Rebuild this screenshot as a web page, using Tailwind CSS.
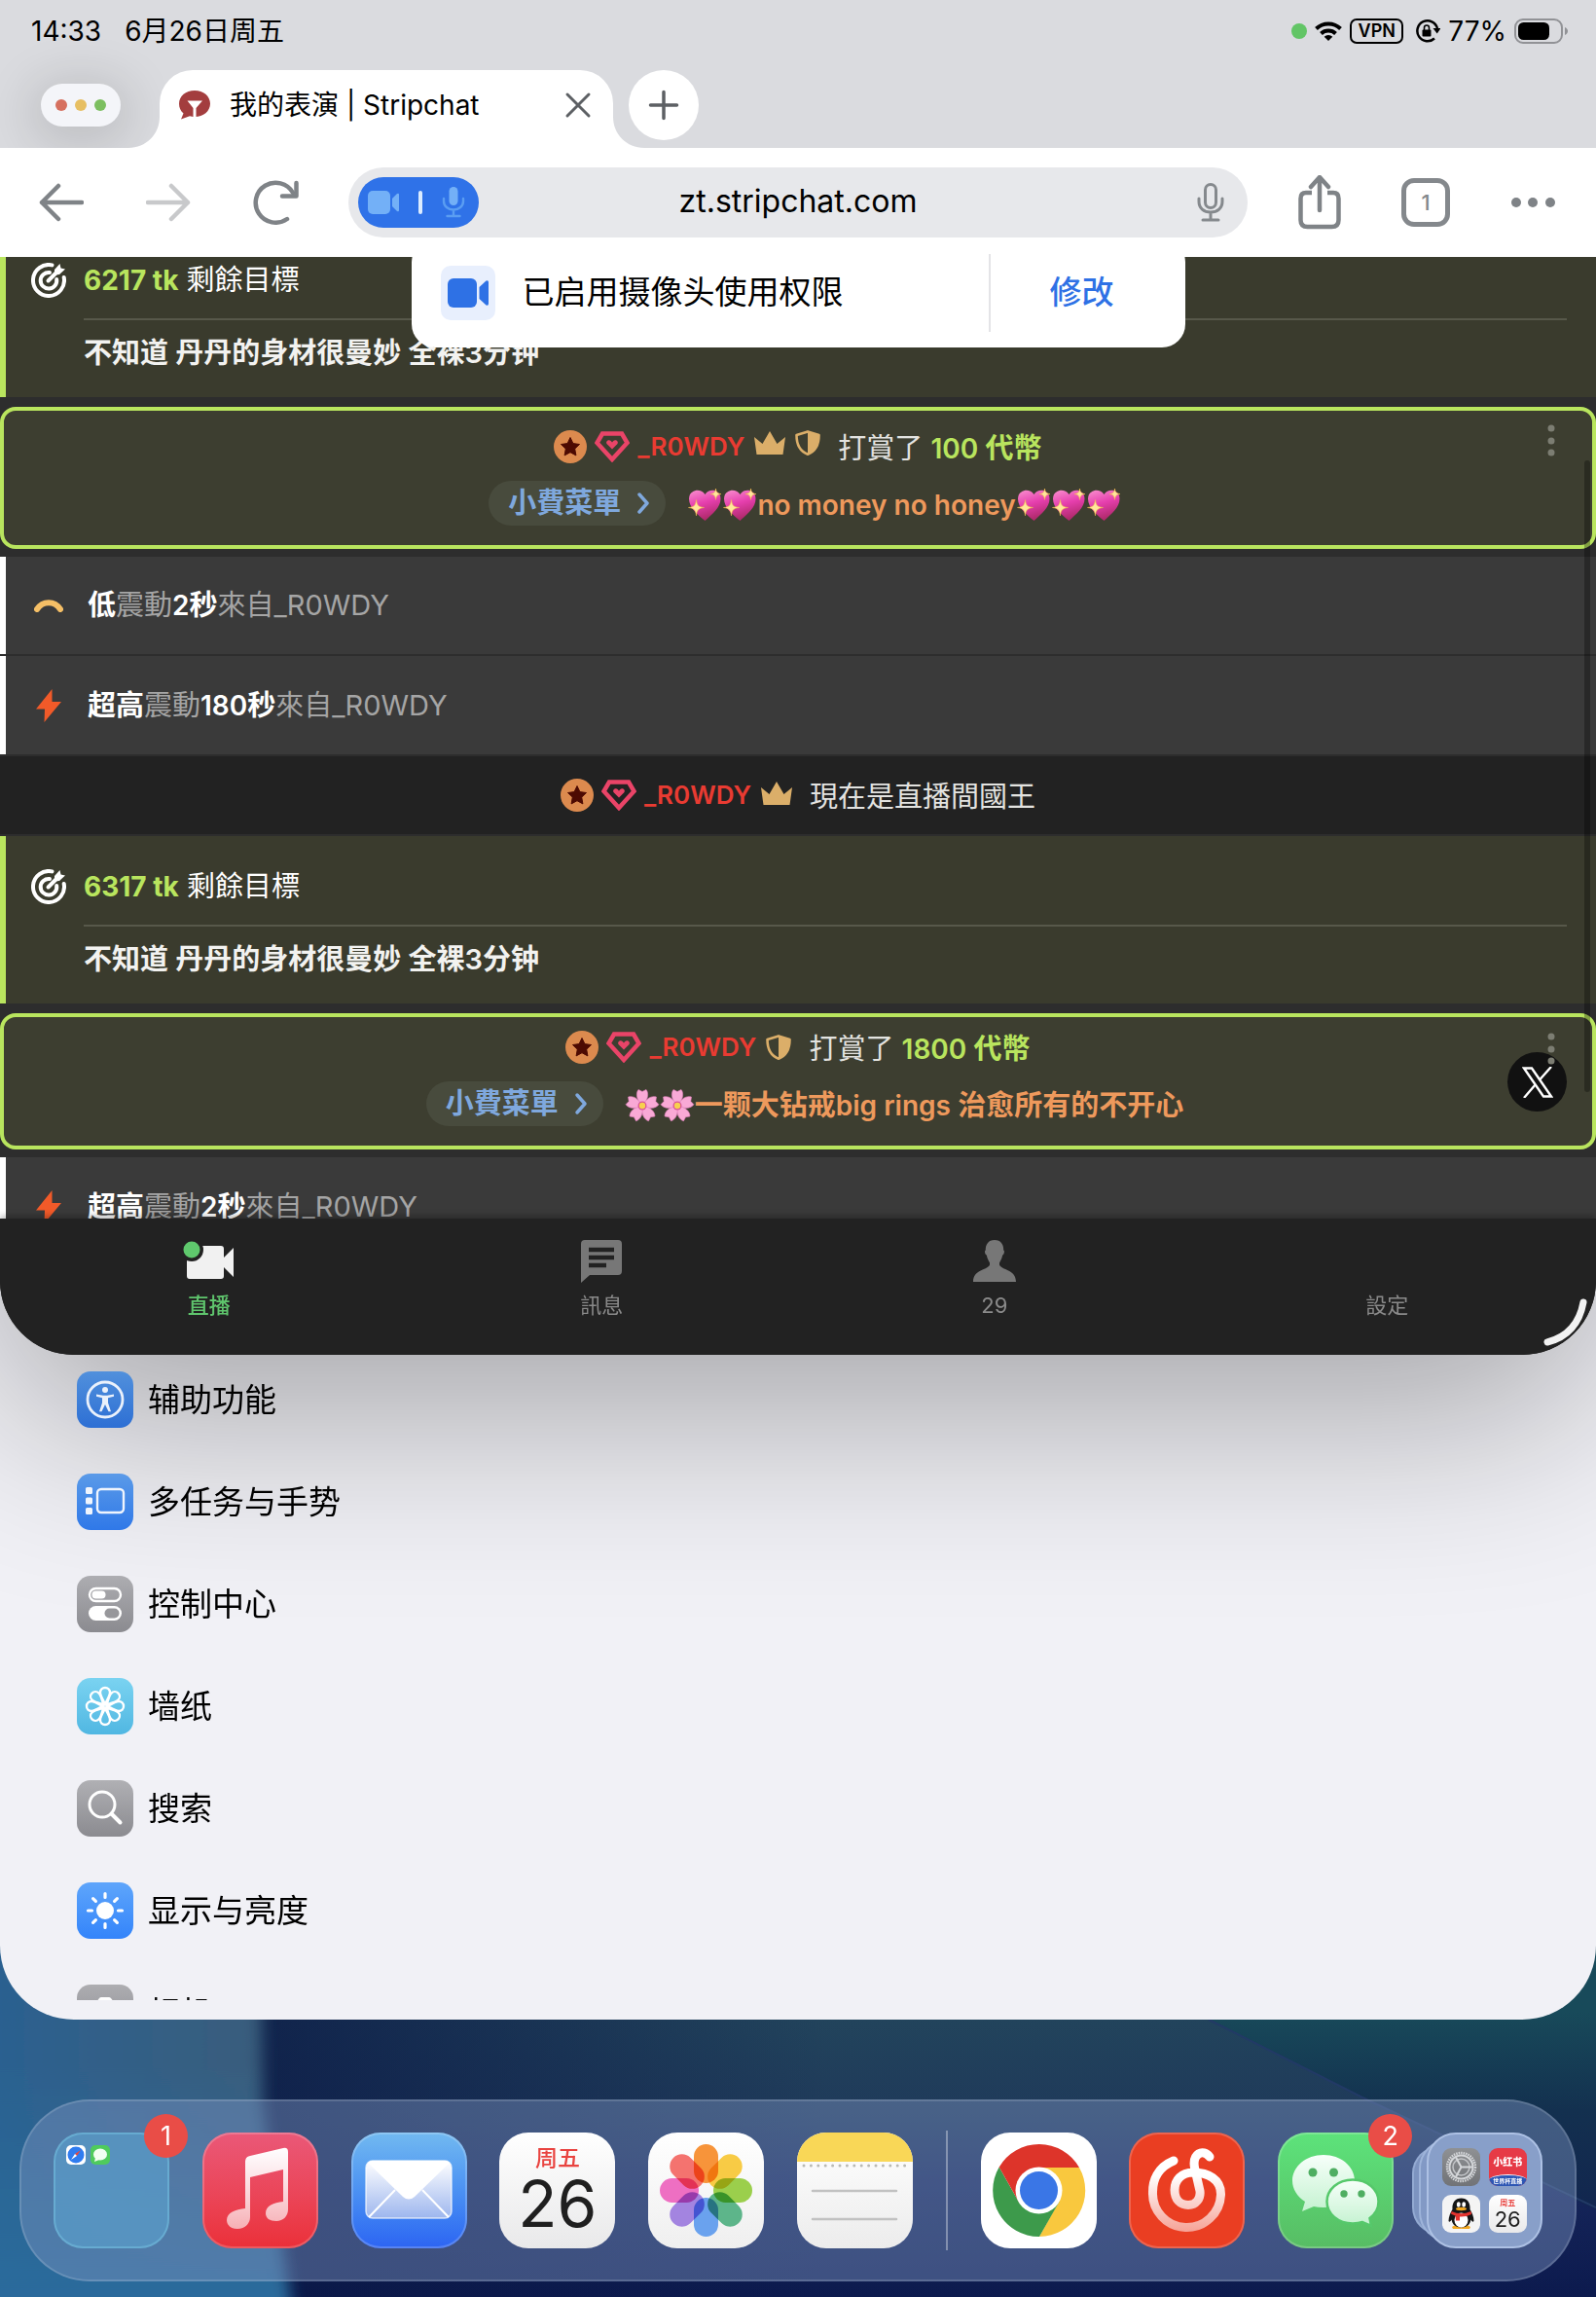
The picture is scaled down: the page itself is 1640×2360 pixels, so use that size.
<!DOCTYPE html>
<html lang="zh-CN">
<head>
    <meta charset="UTF-8">
    <meta name="viewport" content="width=device-width, initial-scale=1.0">
    <title>我的表演 | Stripchat</title>
    <script src="https://cdn.jsdelivr.net/npm/@tailwindcss/browser@4"></script>
</head>
<body class="bg-[#0c1c4c] font-['Inter','Noto_Sans_CJK_SC',sans-serif] text-black">

    <!-- 共用图标 -->
    <svg width="0" height="0" class="absolute" aria-hidden="true">
        <defs>
            <linearGradient id="heart-fill" x1="0" y1="0" x2="0.3" y2="1">
                <stop offset="0" stop-color="#f98fce"/><stop offset="0.5" stop-color="#e63fae"/><stop offset="1" stop-color="#b02a6c"/>
            </linearGradient>
            <linearGradient id="white-fade" x1="0" y1="0" x2="0" y2="1">
                <stop offset="0" stop-color="#fff"/><stop offset="1" stop-color="#fff" stop-opacity="0.6"/>
            </linearGradient>
            <symbol id="i-league" viewBox="0 0 34 34">
                <circle cx="17" cy="17" r="17" fill="#dc8a4e"/>
                <path d="M17 7.500l2.900 6.100 6.600.9-4.800 4.600 1.200 6.800-5.900-3.200-5.900 3.200 1.200-6.800-4.800-4.600 6.600-.9z" fill="#4d0a02" stroke="#4d0a02" stroke-linejoin="round"/>
            </symbol>
            <symbol id="i-gem" viewBox="0 0 36 32">
                <path d="M8 2.500h20l5.500 9.500L18 29 2.500 12z" fill="none" stroke="#ea4468" stroke-width="4.500"/>
                <path d="M18 18.500l-5.300-5.200c-2-2.500 1.800-5.300 4-3.200l1.300 1.300 1.300-1.300c2.200-2.100 6 .7 4 3.200z" fill="#ea4468"/>
            </symbol>
            <symbol id="i-crown" viewBox="0 0 32 24">
                <path d="M2.500 24L0 6l8.500 7L16 0l7.500 13L32 6l-2.500 18z" fill="#dbae69"/>
            </symbol>
            <symbol id="i-shield" viewBox="0 0 26 26">
                <path d="M13 1.400L24.500 5C24.500 15 21.500 21.500 13 24.700 4.500 21.500 1.500 15 1.500 5z" fill="none" stroke="#dbae69" stroke-width="2.600" stroke-linejoin="round"/>
                <path d="M13 1.400L24.500 5C24.500 15 21.500 21.500 13 24.700z" fill="#dbae69"/>
            </symbol>
            <symbol id="i-heart" viewBox="0 0 36 36">
                <path d="M18.500 34C11 28 2 20.500 2 11.500 2 2.500 13.500-.5 18.500 7 23.500-.5 34.500 2.500 34.500 11.500 34.500 20.500 26 27 18.500 34z" fill="url(#heart-fill)"/>
                <path d="M9.500 12.500c.8 5.800 2.300 7.300 8 8-5.700.8-7.200 2.300-8 8.300-.8-6-2.300-7.500-8-8.300 5.700-.7 7.200-2.200 8-8zM29.500 1c.6 4 1.700 5 5.500 5.600-3.800.6-4.900 1.700-5.500 5.800-.6-4.100-1.700-5.200-5.500-5.800C27.800 6 28.900 5 29.500 1z" fill="#ffe79a" stroke="#f3b74f" stroke-width=".6"/>
            </symbol>
            <symbol id="i-blossom" viewBox="0 0 36 36">
                <g fill="#f9a9d6" stroke="#e382bd" stroke-width=".6">
                    <path id="petal" d="M18 17C12 13 11 5 14 1.500l4 2 4-2C25 5 24 13 18 17z"/>
                    <use href="#petal" transform="rotate(72 18 18)"/>
                    <use href="#petal" transform="rotate(144 18 18)"/>
                    <use href="#petal" transform="rotate(216 18 18)"/>
                    <use href="#petal" transform="rotate(288 18 18)"/>
                </g>
                <circle cx="18" cy="18" r="4.500" fill="#d9529a"/><circle cx="18" cy="18" r="3.200" fill="#f7d04e"/>
            </symbol>
            <symbol id="i-goal" viewBox="0 0 36 36">
                <g fill="none" stroke="#fff" stroke-width="4" stroke-linecap="round">
                    <path d="M21.500 2.400A16 16 0 1 0 33.700 15"/>
                    <path d="M19 10A8.300 8.300 0 1 0 26.200 17"/>
                    <path d="M17.500 18.500L26 10"/>
                </g>
                <path d="M24 7l5.500-6 1 4.500 4.500 1-6 5.500-5 .500z" fill="#fff"/>
            </symbol>
            <symbol id="i-bolt" viewBox="0 0 26 34">
                <path d="M16.500 0L0 20.500h9L8.500 34 26 13h-9.500z" fill="#f15a29"/>
            </symbol>
            <symbol id="i-kebab" viewBox="0 0 8 34">
                <g fill="#7c7d72"><circle cx="4" cy="4" r="3.500"/><circle cx="4" cy="17" r="3.500"/><circle cx="4" cy="29" r="3.500"/></g>
            </symbol>
            <symbol id="i-chevron" viewBox="0 0 14 24">
                <path d="M3 3l8 9-8 9" fill="none" stroke="#7fa8dd" stroke-width="3.500" stroke-linecap="round" stroke-linejoin="round"/>
            </symbol>
        </defs>
    </svg>

    <main class="relative isolate flex min-h-screen flex-col">

        <!-- 壁纸 -->
        <svg class="absolute inset-x-0 bottom-0 -z-10 h-[480px] w-full" viewBox="0 0 1640 480" preserveAspectRatio="none" aria-hidden="true">
            <defs>
                <linearGradient id="wp-main" x1="0" y1="0" x2="0" y2="1">
                    <stop offset="0.4" stop-color="#22445c"/><stop offset="0.6" stop-color="#1f3a5a"/><stop offset="0.75" stop-color="#16265a"/><stop offset="1" stop-color="#0c1a4e"/>
                </linearGradient>
                <linearGradient id="wp-dark" x1="0" y1="0" x2="1" y2="0">
                    <stop offset="0" stop-color="#0a1846" stop-opacity="0.75"/><stop offset="1" stop-color="#0a1846" stop-opacity="0"/>
                </linearGradient>
                <linearGradient id="wp-left" x1="0" y1="0" x2="1" y2="0">
                    <stop offset="0" stop-color="#286294"/><stop offset="1" stop-color="#3b5c7a"/>
                </linearGradient>
                <linearGradient id="wp-left-low" x1="0" y1="0" x2="0" y2="1">
                    <stop offset="0.5" stop-color="#2b6b9c" stop-opacity="0"/><stop offset="1" stop-color="#2b6b9c"/>
                </linearGradient>
                <linearGradient id="wp-right" x1="0" y1="0" x2="0" y2="1">
                    <stop offset="0.3" stop-color="#184a5a"/><stop offset="0.65" stop-color="#13304f"/><stop offset="1" stop-color="#12264f"/>
                </linearGradient>
                <filter id="wp-blur"><feGaussianBlur stdDeviation="8 0"/></filter>
            </defs>
            <rect width="1640" height="480" fill="url(#wp-main)"/>
            <rect x="250" width="600" height="480" fill="url(#wp-dark)"/>
            <path d="M1100 100L1242 195 1400 275 1640 390V100z" fill="url(#wp-right)"/>
            <path d="M1242 195L1400 275 1640 388" fill="none" stroke="#223a66" stroke-width="2"/>
            <g filter="url(#wp-blur)">
                <path d="M-60 0H266L270 280 298 480H-60z" fill="url(#wp-left)"/>
                <path d="M-60 0H266L270 280 298 480H-60z" fill="url(#wp-left-low)"/>
            </g>
        </svg>

        <!-- 设置窗口 -->
        <div class="overflow-hidden rounded-b-[76px] bg-[#f1f1f6] pb-5">

            <!-- 浏览器窗口 -->
            <section class="relative overflow-clip rounded-b-[76px] bg-[#222] shadow-[0_60px_200px_0_rgba(0,0,0,0.32)]">

                <header class="bg-[#dadbdf]">
                    <div class="flex h-16 items-center justify-between pr-7 pl-8 text-[28px] leading-none">
                        <div class="flex gap-6">
                            <time>14:33</time>
                            <span>6月26日周五</span>
                        </div>
                        <div class="flex items-center gap-2">
                            <span class="size-4 rounded-full bg-[#62c566]"></span>
                            <svg class="h-5 w-7" viewBox="0 0 28 20" aria-label="Wi-Fi">
                                <g fill="none" stroke="#000" stroke-width="4"><path d="M1.500 7.500a18 18 0 0 1 25 0"/><path d="M6.500 12.500a11 11 0 0 1 15 0"/></g>
                                <path d="M14 20l-4.300-4.300a6 6 0 0 1 8.600 0z"/>
                            </svg>
                            <span class="flex h-[26px] w-[55px] items-center justify-center rounded-[7px] border-2 border-black text-lg leading-none font-semibold">VPN</span>
                            <svg class="ml-1 size-[26px]" viewBox="0 0 26 26" aria-label="旋转锁定">
                                <path d="M20 20.500A10.500 10.500 0 1 1 23 10" fill="none" stroke="#000" stroke-width="2.500"/>
                                <path d="M18.500 10h8L22.700 15.500z"/>
                                <rect x="7.500" y="11.500" width="9" height="7" rx="1"/><path d="M9.500 12V9.500a2.500 2.500 0 0 1 5 0V12" fill="none" stroke="#000" stroke-width="1.600"/>
                            </svg>
                            <span>77%</span>
                            <svg class="h-[26px] w-14" viewBox="0 0 56 26" aria-label="电池">
                                <rect x="1" y="1" width="48" height="24" rx="8" fill="none" stroke="#919296" stroke-width="2"/>
                                <rect x="4" y="4" width="32" height="18" rx="5.500"/><path d="M52 9c4 1.500 4 6.500 0 8z" fill="#919296"/>
                            </svg>
                        </div>
                    </div>

                    <!-- 标签栏 -->
                    <div class="flex h-22 items-end">
                        <div class="flex h-22 w-[164px] items-center pl-[42px]">
                            <button class="flex h-11 w-[82px] items-center justify-center gap-2 rounded-full bg-[#f4f5f9] shadow-[0_8px_50px_12px_rgba(0,0,0,0.13)]" aria-label="窗口控制">
                                <span class="size-3 rounded-full bg-[#d6705f]"></span>
                                <span class="size-3 rounded-full bg-[#e7bf62]"></span>
                                <span class="size-3 rounded-full bg-[#7cbf60]"></span>
                            </button>
                        </div>
                        <div class="relative flex h-20 w-[466px] items-center rounded-t-[34px] bg-white pr-5 pb-2 pl-5">
                            <svg class="absolute bottom-0 -left-8 size-8" viewBox="0 0 32 32" aria-hidden="true"><path d="M32 0v32H0C18 32 32 18 32 0z" fill="#fff"/></svg>
                            <svg class="absolute -right-8 bottom-0 size-8" viewBox="0 0 32 32" aria-hidden="true"><path d="M0 0v32h32C14 32 0 18 0 0z" fill="#fff"/></svg>
                            <svg class="h-[30px] w-8 shrink-0" viewBox="0 0 32 30" aria-hidden="true">
                                <path d="M16 0c9 0 16 5.800 16 13.500S25 27 16 27c-2 0-3.500-.2-5-.7L2 29.500l2.500-6C1.500 21 0 17.500 0 13.500 0 5.800 7 0 16 0z" fill="#a33d3e"/>
                                <path d="M8.500 10.500h15.500L17.500 18v9h-3v-9z" fill="#fff"/>
                            </svg>
                            <h1 class="ml-5 text-[28px] whitespace-nowrap">我的表演 | Stripchat</h1>
                            <button class="ml-auto" aria-label="关闭标签页">
                                <svg class="size-8" viewBox="0 0 32 32"><path d="M5 5l22 22M27 5L5 27" stroke="#5d6064" stroke-width="3" stroke-linecap="round"/></svg>
                            </button>
                        </div>
                        <button class="mb-2 ml-4 flex size-[72px] items-center justify-center rounded-full bg-white" aria-label="新建标签页">
                            <svg class="size-8" viewBox="0 0 32 32"><path d="M16 2.500v27M2.500 16h27" stroke="#5d6064" stroke-width="3.500" stroke-linecap="round"/></svg>
                        </button>
                    </div>
                </header>

                <!-- 地址栏 -->
                <div class="relative flex h-28 items-center bg-white pr-10 pl-10">
                    <button aria-label="返回">
                        <svg class="h-10 w-[46px]" viewBox="0 0 46 40"><path d="M44 20H3M20 3L3 20l17 17" fill="none" stroke="#7f8387" stroke-width="4.500" stroke-linecap="round" stroke-linejoin="round"/></svg>
                    </button>
                    <button class="ml-16" aria-label="前进">
                        <svg class="h-10 w-[46px]" viewBox="0 0 46 40"><path d="M2 20h41M26 3l17 17-17 17" fill="none" stroke="#c8c9cb" stroke-width="4.500" stroke-linecap="round" stroke-linejoin="round"/></svg>
                    </button>
                    <button class="ml-16" aria-label="重新加载">
                        <svg class="h-[46px] w-12" viewBox="0 0 48 46"><g fill="none" stroke="#7f8387" stroke-width="4.500" stroke-linecap="round" stroke-linejoin="round"><path d="M35 40A20.500 20.500 0 1 1 41 13"/><path d="M44.500 3v13.500H30"/></g></svg>
                    </button>
                    <div class="relative ml-[50px] flex h-18 flex-1 items-center rounded-full bg-[#e7e8eb]">
                        <button class="absolute left-[10px] flex h-[52px] w-[124px] items-center justify-between rounded-full bg-[#2f72e8] px-[10px]" aria-label="摄像头和麦克风权限">
                            <svg class="h-6 w-8" viewBox="0 0 32 24"><rect width="23" height="24" rx="5" fill="#73b0f7"/><path d="M25 8l5-5q2-1 2 1v16q0 2-2 1l-5-5z" fill="#73b0f7"/></svg>
                            <span class="h-6 w-1 rounded bg-[#dcecff]"></span>
                            <svg class="mr-1 h-8 w-6" viewBox="0 0 24 32"><rect x="7.500" y="0" width="9" height="19" rx="4.500" fill="#73b0f7"/><path d="M2 12v3a10 8.500 0 0 0 20 0v-3M12 24v6M5.500 30h13" fill="none" stroke="#5a9df2" stroke-width="2.400" stroke-linecap="round"/></svg>
                        </button>
                        <input type="text" aria-label="网址" value="zt.stripchat.com" class="h-full w-full bg-transparent px-40 pb-1 text-center text-[32px] outline-none">
                        <button class="absolute right-6" aria-label="语音搜索">
                            <svg class="h-10 w-7" viewBox="0 0 28 40"><g fill="none" stroke="#85898d" stroke-width="3" stroke-linecap="round"><rect x="8.500" y="1.500" width="11" height="24" rx="5.500"/><path d="M2 16v3c0 7 5 11 12 11s12-4 12-11v-3M14 31v7M6 38h16"/></g></svg>
                        </button>
                    </div>
                    <button class="ml-[52px]" aria-label="分享">
                        <svg class="h-14 w-11" viewBox="0 0 44 56"><g fill="none" stroke="#7f8387" stroke-width="4.500" stroke-linecap="round" stroke-linejoin="round"><path d="M22 36V3M13 12l9-10 9 10"/><path d="M14 18H8q-5.500 0-5.500 6v22q0 7 7 7h25q7 0 7-7V24q0-6-5.500-6H30" stroke-linecap="butt"/></g></svg>
                    </button>
                    <button class="ml-[62px] flex size-[50px] items-center justify-center rounded-[13px] border-[5px] border-[#84888c] text-[22px] font-medium text-[#84888c]" aria-label="标签页数量">1</button>
                    <button class="ml-[62px]" aria-label="更多">
                        <svg class="h-10 w-12" viewBox="0 0 48 40"><g fill="#7f8387"><circle cx="6" cy="20" r="5"/><circle cx="23" cy="20" r="5"/><circle cx="41" cy="20" r="5"/></g></svg>
                    </button>
                </div>

                <!-- 权限提示 -->
                <div class="absolute inset-x-0 top-[245px] z-10 flex justify-center">
                    <div role="status" class="flex h-28 w-[795px] rounded-[24px] bg-white text-[33px]">
                        <div class="flex flex-1 items-center gap-7 pl-[30px]">
                            <span class="flex size-14 items-center justify-center rounded-[10px] bg-[#e8effd]">
                                <svg class="h-[30px] w-[42px]" viewBox="0 0 42 30" aria-hidden="true"><rect width="30" height="30" rx="6" fill="#2e71e5"/><path d="M32.500 9l7-6.500q2.500-1 2.500 1.500v22q0 2.500-2.500 1.500l-7-6.500z" fill="#2e71e5"/></svg>
                            </span>
                            <p>已启用摄像头使用权限</p>
                        </div>
                        <div class="my-4 w-[2px] bg-[#e4e4e7]"></div>
                        <button class="w-[200px] pr-3 font-medium text-[#2e71e5]">修改</button>
                    </div>
                </div>

                <!-- 聊天记录 -->
                <div class="relative h-[988px] overflow-hidden bg-[#2d2d2d] font-['Inter','Noto_Sans_CJK_TC',sans-serif] text-[29px] leading-9 text-[#e3e3e0]">
                    <ul class="-mt-7">
                        <li class="flex h-[172px] gap-[18px] border-l-[6px] border-[#b9e55e] bg-[#3a3b2d] pt-[34px] pr-[30px] pl-[26px]">
                            <svg class="size-9 shrink-0"><use href="#i-goal"/></svg>
                            <div class="flex-1">
                                <p class="border-b-2 border-[#57584a] pb-[21px] text-white"><strong class="text-[28px] font-bold text-[#b9e55e]">6217 tk</strong> 剩餘目標</p>
                                <p class="pt-4 font-semibold text-[#f2f2f0]">不知道 丹丹的身材很曼妙 全裸3分钟</p>
                            </div>
                        </li>
                        <li class="relative mt-[10px] h-[146px] rounded-2xl border-4 border-[#b9e55e] bg-[#3d3e30] pt-[13px]">
                            <div class="flex h-12 items-center justify-center">
                                <svg class="size-[34px]"><use href="#i-league"/></svg>
                                <svg class="ml-2 h-8 w-9"><use href="#i-gem"/></svg>
                                <a href="#" class="ml-2 text-[26px] font-semibold text-[#e93b32]">_R0WDY</a>
                                <svg class="mb-2 ml-[10px] h-6 w-8"><use href="#i-crown"/></svg>
                                <svg class="mb-2 ml-[10px] size-[26px]"><use href="#i-shield"/></svg>
                                <p class="mt-1 ml-[18px]">打賞了 <strong class="font-semibold text-[#b9e55e]"><span class="text-[28px]">100</span> 代幣</strong></p>
                            </div>
                            <div class="mt-[11px] flex h-[46px] items-center justify-center pl-[14px]">
                                <button class="flex h-full items-center gap-4 rounded-full bg-[#484b3d] pr-4 pl-5 font-semibold text-[#7fa8dd]">小費菜單<svg class="h-6 w-[14px]"><use href="#i-chevron"/></svg></button>
                                <p class="mt-1 ml-[22px] flex items-center text-[28px] font-semibold text-[#ee995c]">
                                    <svg class="size-9" role="img" aria-label="💖"><use href="#i-heart"/></svg><svg class="size-9" role="img" aria-label="💖"><use href="#i-heart"/></svg>no money no honey<svg class="size-9" role="img" aria-label="💖"><use href="#i-heart"/></svg><svg class="size-9" role="img" aria-label="💖"><use href="#i-heart"/></svg><svg class="size-9" role="img" aria-label="💖"><use href="#i-heart"/></svg>
                                </p>
                            </div>
                            <button class="absolute top-[14px] right-[38px]" aria-label="更多"><svg class="h-[34px] w-2"><use href="#i-kebab"/></svg></button>
                        </li>
                        <li class="mt-2 flex h-25 items-center border-l-[6px] border-white bg-[#3a3a3a] pl-[29px] text-[#a5a5a5]">
                            <svg class="h-[14px] w-[30px]" viewBox="0 0 30 14" aria-hidden="true"><path d="M3 11C9 2 21 2 27 11" fill="none" stroke="#f5bf66" stroke-width="6" stroke-linecap="round"/></svg>
                            <p class="ml-[25px]"><b class="font-semibold text-white">低</b>震動<b class="font-semibold text-white"><span class="text-[28px]">2</span>秒</b>來自_R0WDY</p>
                        </li>
                        <li class="mt-[2px] flex h-[101px] items-center border-l-[6px] border-white bg-[#3a3a3a] pl-[31px] text-[#a5a5a5]">
                            <svg class="h-[34px] w-[26px]"><use href="#i-bolt"/></svg>
                            <p class="ml-[27px]"><b class="font-semibold text-white">超高</b>震動<b class="font-semibold text-white"><span class="text-[28px]">180</span>秒</b>來自_R0WDY</p>
                        </li>
                        <li class="mt-[2px] flex h-20 items-center justify-center bg-[#222]">
                            <svg class="size-[34px]"><use href="#i-league"/></svg>
                            <svg class="ml-2 h-8 w-9"><use href="#i-gem"/></svg>
                            <a href="#" class="ml-2 text-[26px] font-semibold text-[#e93b32]">_R0WDY</a>
                            <svg class="mb-1 ml-[10px] h-6 w-8"><use href="#i-crown"/></svg>
                            <p class="mt-1 ml-[18px]">現在是直播間國王</p>
                        </li>
                        <li class="mt-[2px] flex h-[172px] gap-[18px] border-l-[6px] border-[#b9e55e] bg-[#3a3b2d] pt-[34px] pr-[30px] pl-[26px]">
                            <svg class="size-9 shrink-0"><use href="#i-goal"/></svg>
                            <div class="flex-1">
                                <p class="border-b-2 border-[#57584a] pb-[21px] text-white"><strong class="text-[28px] font-bold text-[#b9e55e]">6317 tk</strong> 剩餘目標</p>
                                <p class="pt-4 font-semibold text-[#f2f2f0]">不知道 丹丹的身材很曼妙 全裸3分钟</p>
                            </div>
                        </li>
                        <li class="relative mt-[10px] h-[140px] rounded-2xl border-4 border-[#b9e55e] bg-[#3d3e30] pt-[7px]">
                            <div class="flex h-12 items-center justify-center">
                                <svg class="size-[34px]"><use href="#i-league"/></svg>
                                <svg class="ml-2 h-8 w-9"><use href="#i-gem"/></svg>
                                <a href="#" class="ml-2 text-[26px] font-semibold text-[#e93b32]">_R0WDY</a>
                                <svg class="ml-[10px] size-[26px]"><use href="#i-shield"/></svg>
                                <p class="mt-1 ml-[18px]">打賞了 <strong class="font-semibold text-[#b9e55e]"><span class="text-[28px]">1800</span> 代幣</strong></p>
                            </div>
                            <div class="mt-[11px] flex h-[46px] items-center justify-center pl-[14px]">
                                <button class="flex h-full items-center gap-4 rounded-full bg-[#484b3d] pr-4 pl-5 font-semibold text-[#7fa8dd]">小費菜單<svg class="h-6 w-[14px]"><use href="#i-chevron"/></svg></button>
                                <p class="mt-1 ml-[22px] flex items-center font-semibold text-[#ee995c]">
                                    <svg class="size-9" role="img" aria-label="🌸"><use href="#i-blossom"/></svg><svg class="size-9" role="img" aria-label="🌸"><use href="#i-blossom"/></svg><span>一颗大钻戒<span class="text-[28px]">big rings</span> 治愈所有的不开心</span>
                                </p>
                            </div>
                            <a href="#" class="absolute top-9 right-[26px] flex size-[61px] items-center justify-center rounded-full bg-[#111]" aria-label="X">
                                <svg class="size-8" viewBox="0 0 32 32" fill="none" stroke="#fff" stroke-width="2.400"><path d="M2 1.500h8L30 30.500h-8z"/><path d="M30 0L18 13.500M14 18L2 32"/></svg>
                            </a>
                            <button class="absolute top-4 right-[38px]" aria-label="更多"><svg class="h-[34px] w-2"><use href="#i-kebab"/></svg></button>
                        </li>
                        <li class="mt-2 flex h-[101px] items-center border-l-[6px] border-white bg-[#3a3a3a] pl-[31px] text-[#a5a5a5]">
                            <svg class="h-[34px] w-[26px]"><use href="#i-bolt"/></svg>
                            <p class="ml-[27px]"><b class="font-semibold text-white">超高</b>震動<b class="font-semibold text-white"><span class="text-[28px]">2</span>秒</b>來自_R0WDY</p>
                        </li>
                    </ul>
                    <div class="absolute top-[209px] right-[6px] h-[649px] w-[6px] rounded-full bg-black/30"></div>
                </div>

                <!-- 底部导航 -->
                <nav class="relative grid h-[140px] grid-cols-4 bg-[#222] px-[13px] pt-[22px] font-['Inter','Noto_Sans_CJK_TC',sans-serif] text-[22px] leading-8 text-[#8a8a8a] shadow-[0_-3px_6px_rgba(0,0,0,0.25)]">
                    <a href="#" class="flex flex-col items-center gap-[7px] font-medium text-[#5fc56d]">
                        <svg class="h-11 w-[54px]" viewBox="0 0 54 44" aria-hidden="true">
                            <path d="M4 9q0-3 3-3h32q3 0 3 3v9l10-10v30l-10-10v9q0 3-3 3H7q-3 0-3-3z" fill="#f1f1f1"/>
                            <circle cx="9" cy="10" r="12" fill="#222"/><circle cx="9" cy="10" r="8.500" fill="#5fc96d"/>
                        </svg>
                        直播
                    </a>
                    <a href="#" class="flex flex-col items-center gap-[7px]">
                        <svg class="h-11 w-[42px]" viewBox="0 0 42 44" aria-hidden="true">
                            <path d="M4 0h34q4 0 4 4v28q0 4-4 4H9l-9 8V4q0-4 4-4z" fill="#777"/>
                            <path d="M8 10h26M8 18h26M8 26h18" stroke="#222" stroke-width="4.500"/>
                        </svg>
                        訊息
                    </a>
                    <a href="#" class="flex flex-col items-center gap-[7px]">
                        <svg class="h-11 w-[46px]" viewBox="0 0 46 44" aria-hidden="true">
                            <path d="M23 0c6.500 0 9.500 5 9.200 10.500 1.400 0 .8 4.500-1 5-.7 4-2 5.500-3.200 8v2c2 5.500 17 4.500 17 17.500H1c0-13 15-12 17-17.500v-2c-1.200-2.500-2.500-4-3.200-8-1.800-.5-2.400-5-1-5C13.500 5 16.500 0 23 0z" fill="#777"/>
                        </svg>
                        29
                    </a>
                    <a href="#" class="flex flex-col items-center gap-[7px]">
                        <span class="h-11"></span>
                        設定
                    </a>
                    <svg class="absolute right-[6px] bottom-2 h-14 w-12" viewBox="0 0 48 56" aria-hidden="true"><path d="M41 10Q35 43 4 51" fill="none" stroke="#f2f2f2" stroke-width="7" stroke-linecap="round"/></svg>
                </nav>
            </section>

            <!-- 设置列表 -->
            <div class="h-[663px] overflow-hidden pt-[17px] pl-[79px] text-[33px] leading-none">
                <ul class="flex flex-col gap-[47px]">
                    <li><a href="#" class="relative flex items-center gap-[15px]">
                        <svg class="size-[58px] rounded-[14px] bg-gradient-to-b from-[#5190dc] to-[#2d6fd4]" viewBox="0 0 58 58" aria-hidden="true">
                            <circle cx="29" cy="29" r="18" fill="none" stroke="#eaf1fb" stroke-width="2.800"/>
                            <circle cx="29" cy="19" r="3" fill="#eaf1fb"/><path d="M20 23.500l7 1.200h4l7-1.200v2.200l-6 1.500v5l3 9h-2.500L29 34l-3.500 7.200H23l3-9v-5l-6-1.500z" fill="#eaf1fb"/>
                        </svg>辅助功能</a></li>
                    <li><a href="#" class="relative flex items-center gap-[15px]">
                        <svg class="size-[58px] rounded-[14px] bg-gradient-to-b from-[#5a9ae8] to-[#2f78e8]" viewBox="0 0 58 58" aria-hidden="true">
                            <rect x="21" y="16" width="27" height="24" rx="4" fill="none" stroke="#f0f5fd" stroke-width="2.400"/>
                            <g fill="#f0f5fd"><rect x="9" y="14" width="7" height="7" rx="1.500"/><rect x="9" y="24.500" width="7" height="7" rx="1.500"/><rect x="9" y="35" width="7" height="7" rx="1.500"/></g>
                        </svg>多任务与手势</a></li>
                    <li><a href="#" class="relative flex items-center gap-[15px]">
                        <svg class="size-[58px] rounded-[14px] bg-gradient-to-b from-[#adadb1] to-[#8b8b90]" viewBox="0 0 58 58" aria-hidden="true">
                            <rect x="13" y="13" width="32" height="13" rx="6.500" fill="none" stroke="#fff" stroke-width="2.400"/><rect x="15.500" y="15.500" width="14" height="8" rx="4" fill="#fff"/>
                            <rect x="12" y="31" width="34" height="15" rx="7.500" fill="#fff"/><rect x="28.500" y="33.500" width="15" height="10" rx="5" fill="#97979b"/>
                        </svg>控制中心</a></li>
                    <li><a href="#" class="relative flex items-center gap-[15px]">
                        <svg class="size-[58px] rounded-[14px] bg-gradient-to-b from-[#7ad3f1] to-[#50b7e2]" viewBox="0 0 58 58" aria-hidden="true">
                            <g fill="none" stroke="#fff" stroke-width="2.400">
                                <path id="wp-petal" d="M29 26.500C26 21 24 18 24 15a5 5 0 0 1 10 0c0 3-2 6-5 11.500z"/>
                                <use href="#wp-petal" transform="rotate(45 29 29)"/><use href="#wp-petal" transform="rotate(90 29 29)"/><use href="#wp-petal" transform="rotate(135 29 29)"/>
                                <use href="#wp-petal" transform="rotate(180 29 29)"/><use href="#wp-petal" transform="rotate(225 29 29)"/><use href="#wp-petal" transform="rotate(270 29 29)"/><use href="#wp-petal" transform="rotate(315 29 29)"/>
                                <circle cx="29" cy="29" r="2.500"/>
                            </g>
                        </svg>墙纸</a></li>
                    <li><a href="#" class="relative flex items-center gap-[15px]">
                        <svg class="size-[58px] rounded-[14px] bg-gradient-to-b from-[#b0b0b4] to-[#8b8b90]" viewBox="0 0 58 58" aria-hidden="true">
                            <circle cx="26" cy="25" r="13" fill="none" stroke="#fff" stroke-width="3"/><path d="M35.500 34.500L44.500 43.500" stroke="#fff" stroke-width="4" stroke-linecap="round"/>
                        </svg>搜索</a></li>
                    <li><a href="#" class="relative flex items-center gap-[15px]">
                        <svg class="size-[58px] rounded-[14px] bg-gradient-to-b from-[#5ea5fb] to-[#3384fa]" viewBox="0 0 58 58" aria-hidden="true">
                            <circle cx="29" cy="29" r="9" fill="#fff"/>
                            <path d="M29 11.500v4M29 42.500v4M11.500 29h4M42.500 29h4M16.600 16.600l2.800 2.800M38.600 38.600l2.800 2.800M16.600 41.400l2.800-2.800M38.600 19.400l2.800-2.800" stroke="#fff" stroke-width="3.200" stroke-linecap="round"/>
                        </svg>显示与亮度</a></li>
                    <li><a href="#" class="relative flex items-center gap-[15px]">
                        <svg class="size-[58px] rounded-[14px] bg-gradient-to-b from-[#adadb1] to-[#8b8b90]" viewBox="0 0 58 58" aria-hidden="true">
                            <path d="M14 18h6l3-4q1-1 2-1h8q1 0 2 1l3 4h6q3 0 3 3v20q0 3-3 3H14q-3 0-3-3V21q0-3 3-3z" fill="#fff"/><circle cx="29" cy="30" r="8" fill="#97979b"/>
                        </svg>相机</a></li>
                </ul>
            </div>
        </div>

        <!-- 程序坞 -->
        <nav class="mx-5 mt-auto mb-4 flex h-[187px] items-center justify-between rounded-[72px] border-2 border-white/15 bg-[#7a92be]/45 px-[33px]" aria-label="程序坞">
            <a href="#" class="relative grid size-[119px] grid-cols-4 content-start gap-[6px] rounded-[30px] border-2 border-[#6fb6d9]/70 bg-[#5ba3d0]/60 p-[11px]" aria-label="文件夹">
                <svg class="size-5" viewBox="0 0 20 20"><rect width="20" height="20" rx="5" fill="#fff"/><circle cx="10" cy="10" r="8.500" fill="#2f7cf0"/><path d="M15 5l-4 6-2-2z" fill="#e94a40"/><path d="M5 15l4-6 2 2z" fill="#fff"/></svg>
                <svg class="size-5" viewBox="0 0 20 20"><rect width="20" height="20" rx="5" fill="#4fcb5c"/><ellipse cx="10" cy="9.500" rx="7" ry="6" fill="#f1fff1"/><path d="M5 13l-1 4 5-2z" fill="#f1fff1"/></svg>
                <span class="absolute -top-[21px] -right-[21px] flex size-[45px] items-center justify-center rounded-full bg-[#e94d47] text-[27px] leading-none text-white">1</span>
            </a>
            <a href="#" aria-label="音乐">
                <svg class="size-[119px] rounded-[30px] bg-gradient-to-b from-[#ea5878] to-[#eb2f38] shadow-[inset_0_0_0_2px_rgba(255,255,255,0.2)]" viewBox="0 0 119 119">
                    <path d="M44 30q0-5 5-6l34-8q5-1 5 4v59c0 7-5 12-12 12s-11-3-11-8c0-8 8-11 18-12V38l-34 8v41c0 7-6 12-13 12s-11-4-11-9c0-8 9-11 19-12z" fill="url(#white-fade)"/>
                </svg>
            </a>
            <a href="#" aria-label="邮件">
                <svg class="size-[119px] rounded-[30px] bg-gradient-to-b from-[#72b9f0] to-[#2d64f2] shadow-[inset_0_0_0_2px_rgba(255,255,255,0.2)]" viewBox="0 0 119 119">
                    <defs><linearGradient id="mail-fill" x1="0" y1="0" x2="0" y2="1"><stop offset="0" stop-color="#fff"/><stop offset="1" stop-color="#9db6ee"/></linearGradient></defs>
                    <rect x="15" y="29" width="88" height="59" rx="7" fill="url(#mail-fill)" stroke="#fff" stroke-opacity=".7" stroke-width="1.500"/>
                    <path d="M18 87l27-28M100 87L73 59" stroke="#fff" stroke-width="2"/>
                    <path d="M17 31q2-2 5-2h74q3 0 5 2L65 66q-6 5-12 0z" fill="#fff"/>
                </svg>
            </a>
            <a href="#" class="flex size-[119px] flex-col items-center rounded-[30px] bg-gradient-to-b from-white to-[#e9e9ea] pt-[14px]" aria-label="日历">
                <span class="text-[23px] leading-6 font-medium text-[#e94440]">周五</span>
                <span class="text-[66px] leading-[70px] text-[#1f1f1f]">26</span>
            </a>
            <a href="#" aria-label="照片">
                <svg class="size-[119px] rounded-[30px] bg-gradient-to-b from-white to-[#efefef]" viewBox="0 0 119 119">
                    <g class="isolate">
                        <rect class="mix-blend-multiply" x="47" y="12" width="25" height="40" rx="12.500" fill="#f7943a"/>
                        <rect class="mix-blend-multiply" x="47" y="12" width="25" height="40" rx="12.500" fill="#f8cb45" transform="rotate(45 59.500 59.500)"/>
                        <rect class="mix-blend-multiply" x="47" y="12" width="25" height="40" rx="12.500" fill="#9bcf4c" transform="rotate(90 59.500 59.500)"/>
                        <rect class="mix-blend-multiply" x="47" y="12" width="25" height="40" rx="12.500" fill="#5db58a" transform="rotate(135 59.500 59.500)"/>
                        <rect class="mix-blend-multiply" x="47" y="12" width="25" height="40" rx="12.500" fill="#6aa2ee" transform="rotate(180 59.500 59.500)"/>
                        <rect class="mix-blend-multiply" x="47" y="12" width="25" height="40" rx="12.500" fill="#a384e0" transform="rotate(225 59.500 59.500)"/>
                        <rect class="mix-blend-multiply" x="47" y="12" width="25" height="40" rx="12.500" fill="#ee6fc2" transform="rotate(270 59.500 59.500)"/>
                        <rect class="mix-blend-multiply" x="47" y="12" width="25" height="40" rx="12.500" fill="#f4736f" transform="rotate(315 59.500 59.500)"/>
                    </g>
                </svg>
            </a>
            <a href="#" aria-label="备忘录">
                <svg class="size-[119px] rounded-[30px] bg-gradient-to-b from-white to-[#ececec]" viewBox="0 0 119 119">
                    <rect width="119" height="30" fill="#f9d757"/>
                    <path d="M7 34H116" stroke="#b9b9b4" stroke-width="3" stroke-linecap="round" stroke-dasharray="0 7.400"/>
                    <path d="M16 60h86M16 89h86" stroke="#c1c1c1" stroke-width="2.500" stroke-linecap="round"/>
                </svg>
            </a>
            <span class="h-[123px] w-[2px] bg-white/35"></span>
            <a href="#" aria-label="Chrome">
                <svg class="size-[119px] rounded-[30px] bg-white" viewBox="0 0 119 119">
                    <path d="M59.500 36H101A47.500 47.500 0 0 1 60 107L80 71z" fill="#f9c83e"/>
                    <path d="M39 71.500L18.700 35.500A47.500 47.500 0 0 0 60 107L80.500 71z" fill="#3d9a4b"/>
                    <path d="M59.500 36H101A47.500 47.500 0 0 0 18.700 35.500L39 71.500z" fill="#dd342a"/>
                    <circle cx="59.500" cy="59.500" r="24" fill="#fff"/><circle cx="59.500" cy="59.500" r="19.500" fill="#3a76e6"/>
                </svg>
            </a>
            <a href="#" aria-label="网易云音乐">
                <svg class="size-[119px] rounded-[30px] bg-[#ea3e22] shadow-[inset_0_0_0_2px_rgba(255,255,255,0.2)]" viewBox="0 0 119 119">
                    <defs><linearGradient id="ne-fill" gradientUnits="userSpaceOnUse" x1="0" y1="20" x2="0" y2="102"><stop offset="0.300" stop-color="#fff"/><stop offset="1" stop-color="#f6a296"/></linearGradient></defs>
                    <path d="M46 29C29 36 24.500 50 24.500 61a35 35 0 0 0 70 3C95 48 81 41 66 41 54 41 47 49 47 59 47 69 53 74.500 61 74.500S74 68 73 60L67.500 36C65 22 76 16 83 25" fill="none" stroke="url(#ne-fill)" stroke-width="9" stroke-linecap="round"/>
                </svg>
            </a>
            <a href="#" class="relative" aria-label="微信">
                <svg class="size-[119px] rounded-[30px] bg-gradient-to-b from-[#5de37b] to-[#57bd64] shadow-[inset_0_0_0_2px_rgba(255,255,255,0.2)]" viewBox="0 0 119 119">
                    <defs><linearGradient id="wx-fill" x1="0" y1="0" x2="0" y2="1"><stop offset="0" stop-color="#f7fffa"/><stop offset="1" stop-color="#c4f2d0"/></linearGradient></defs>
                    <path d="M47 23c18 0 32 12 32 26.500S65 77 47 77q-6 0-10-1l-12 5 3-10C20 66 15 58 15 49.500 15 35 29 23 47 23z" fill="url(#wx-fill)"/>
                    <circle cx="36" cy="41" r="4.500" fill="#4fae62"/><circle cx="57.500" cy="41" r="4.500" fill="#4fae62"/>
                    <path d="M77 48.500c15 0 26.500 10 26.500 22.500 0 7-3.500 13-9 17l1.500 8-9-4q-4 1.500-10 1.500C62 93.500 50.500 83.500 50.500 71S62 48.500 77 48.500z" fill="url(#wx-fill)" stroke="#56c86b" stroke-width="2.500"/>
                    <circle cx="68" cy="63" r="3.700" fill="#4fae62"/><circle cx="86" cy="63" r="3.700" fill="#4fae62"/>
                </svg>
                <span class="absolute -top-[19px] -right-[19px] flex size-[45px] items-center justify-center rounded-full bg-[#e94d47] text-[27px] leading-none text-white">2</span>
            </a>
            <a href="#" class="relative size-[119px]" aria-label="App 资源库">
                <span class="absolute top-[14px] -left-[15px] h-[91px] w-24 rounded-[28px] border-2 border-[#9db3da]/70 bg-[#7d94c0]"></span>
                <span class="absolute top-[7px] -left-2 h-[105px] w-24 rounded-[30px] border-2 border-[#a5badf]/80 bg-[#8299c5]"></span>
                <span class="absolute inset-0 grid grid-cols-2 content-center justify-items-center gap-y-[9px] rounded-[30px] border-2 border-[#adc1e4] bg-[#889fc9] px-[10px]">
                    <svg class="size-[39px] rounded-[9px] bg-gradient-to-b from-[#8f9194] to-[#717377]" viewBox="0 0 39 39">
                        <circle cx="19.500" cy="19.500" r="14.500" fill="none" stroke="#d5d7da" stroke-width="2.500" stroke-dasharray="1.500 1"/><circle cx="19.500" cy="19.500" r="12" fill="none" stroke="#d5d7da" stroke-width="2"/>
                        <circle cx="19.500" cy="19.500" r="8.500" fill="none" stroke="#c3c5c8" stroke-width="1.500"/><path d="M19.500 19.500H32M19.500 19.500l-6-11M19.500 19.500l-6 11" stroke="#d5d7da" stroke-width="2"/>
                    </svg>
                    <span class="flex size-[39px] flex-col items-center overflow-hidden rounded-[9px] bg-[#e63a46] text-white">
                        <span class="h-[27px] pt-2 text-[10px] leading-3 font-black whitespace-nowrap">小红书</span>
                        <span class="w-full rounded-t-[50%] border-t border-white bg-[#2d56b4] text-center text-[6px] leading-[11px] font-bold whitespace-nowrap">世界杯直播</span>
                    </span>
                    <svg class="size-[39px] rounded-[9px] bg-[#f4f4f4]" viewBox="0 0 39 39">
                        <path d="M10 33q4-3 9-2l1 4H11zM29 33q-4-3-9-2v4h8z" fill="#f3a81f"/>
                        <path d="M19.500 3.500c7 0 9.500 5.500 9 11.500 2 3 4 7.500 4 12-1 1.500-2 .5-3-1.500-1 5.500-4.500 8-10 8s-9-2.500-10-8c-1 2-2 3-3 1.500 0-4.500 2-9 4-12-.5-6 2-11.500 9-11.500z" fill="#161616"/>
                        <ellipse cx="19.500" cy="26" rx="7" ry="7.500" fill="#fff"/><ellipse cx="16.800" cy="10" rx="1.900" ry="2.800" fill="#fff"/><ellipse cx="22.200" cy="10" rx="1.900" ry="2.800" fill="#fff"/>
                        <ellipse cx="19.500" cy="14.500" rx="5.500" ry="1.700" fill="#f3a81f"/><path d="M9.500 17q10 4.500 20 0l.5 3q-6 3-12 2.500v4h-4l-.5-5q-3-1-4.500-2z" fill="#e3342f"/>
                    </svg>
                    <span class="flex size-[39px] flex-col items-center rounded-[9px] bg-gradient-to-b from-white to-[#e9e9ea] pt-[3px]">
                        <span class="text-[8px] leading-[11px] font-bold text-[#e94440]">周五</span>
                        <span class="text-[22px] leading-[22px] text-[#1f1f1f]">26</span>
                    </span>
                </span>
            </a>
        </nav>
    </main>
</body>
</html>
